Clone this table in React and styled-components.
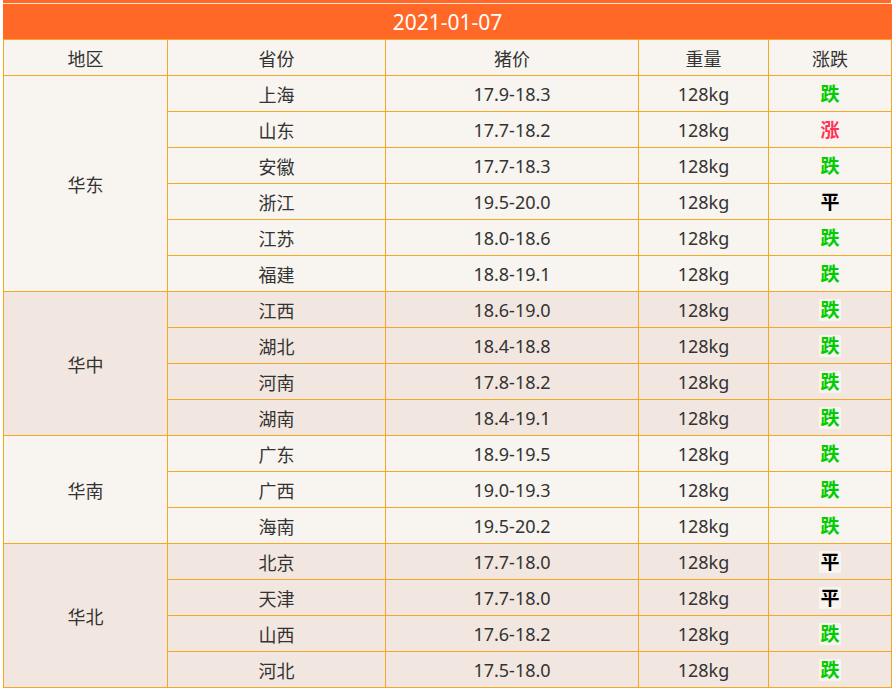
import React from 'react';
import styled, { createGlobalStyle } from 'styled-components';

const GlobalStyle = createGlobalStyle`
    body {
        margin: 0;
        background: #ffffff;
        font-family: "Noto Sans", "Noto Sans CJK SC", sans-serif;
    }
`;

const Page = styled.div`
    width: 888px;
    padding-left: 3px;
`;

const TopStrip = styled.div`
    height: 3px;
    background: #ff6827;
    border-bottom: 1px solid #fbe3d6;
`;

const Table = styled.table`
    width: 888px;
    border-collapse: collapse;
    table-layout: fixed;
    color: #333333;
`;

const Title = styled.th`
    height: 34px;
    padding: 0;
    background: #ff6827;
    border: 1px solid #ff6827;
    border-bottom-color: #f5a623;
    color: #ffffff;
    font-size: 21px;
    font-weight: 400;
    text-align: center;
`;

const HeadCell = styled.th`
    height: 34px;
    padding: 1px 0 0;
    background: #f8f4f0;
    border: 1px solid #f5a623;
    font-size: 18px;
    font-weight: 400;
    text-align: center;
`;

const Row = styled.tr`
    background: ${(props) => props.shaded ? '#f2e6e0' : '#f8f4f0'};
`;

const Cell = styled.td`
    height: 34px;
    padding: 1px 0 0;
    border: 1px solid #f5a623;
    font-size: 18px;
    text-align: center;
`;

const Trend = styled.span`
    display: inline-block;
    padding: 0 1px;
    line-height: 22px;
    background: #f8f4f0;
    font-size: 19px;
    font-weight: 700;
    color: ${(props) => trendColor[props.trend]};
`;

const trendColor = {
    '跌': '#00cc00',
    '涨': '#ff3355',
    '平': '#000000'
};

const regions = [
    {
        name: '华东',
        rows: [
            ['上海', '17.9-18.3', '跌'],
            ['山东', '17.7-18.2', '涨'],
            ['安徽', '17.7-18.3', '跌'],
            ['浙江', '19.5-20.0', '平'],
            ['江苏', '18.0-18.6', '跌'],
            ['福建', '18.8-19.1', '跌']
        ]
    },
    {
        name: '华中',
        rows: [
            ['江西', '18.6-19.0', '跌'],
            ['湖北', '18.4-18.8', '跌'],
            ['河南', '17.8-18.2', '跌'],
            ['湖南', '18.4-19.1', '跌']
        ]
    },
    {
        name: '华南',
        rows: [
            ['广东', '18.9-19.5', '跌'],
            ['广西', '19.0-19.3', '跌'],
            ['海南', '19.5-20.2', '跌']
        ]
    },
    {
        name: '华北',
        rows: [
            ['北京', '17.7-18.0', '平'],
            ['天津', '17.7-18.0', '平'],
            ['山西', '17.6-18.2', '跌'],
            ['河北', '17.5-18.0', '跌']
        ]
    }
];

const App = () => {
    return (
        <Page>
            <GlobalStyle />
            <TopStrip />
            <Table>
                <colgroup>
                    <col style={{ width: 164 }} />
                    <col style={{ width: 218 }} />
                    <col style={{ width: 253 }} />
                    <col style={{ width: 130 }} />
                    <col style={{ width: 123 }} />
                </colgroup>
                <thead>
                    <tr>
                        <Title colSpan={5}>2021-01-07</Title>
                    </tr>
                    <tr>
                        <HeadCell>地区</HeadCell>
                        <HeadCell>省份</HeadCell>
                        <HeadCell>猪价</HeadCell>
                        <HeadCell>重量</HeadCell>
                        <HeadCell>涨跌</HeadCell>
                    </tr>
                </thead>
                <tbody>
                    {
                        regions.map((region, gi) => region.rows.map((row, ri) => (
                            <Row shaded={gi % 2 === 1} key={row[0]}>
                                {ri === 0 && <Cell rowSpan={region.rows.length}>{region.name}</Cell>}
                                <Cell>{row[0]}</Cell>
                                <Cell>{row[1]}</Cell>
                                <Cell>128kg</Cell>
                                <Cell><Trend trend={row[2]}>{row[2]}</Trend></Cell>
                            </Row>
                        )))
                    }
                </tbody>
            </Table>
        </Page>
    );
};

export default App;
